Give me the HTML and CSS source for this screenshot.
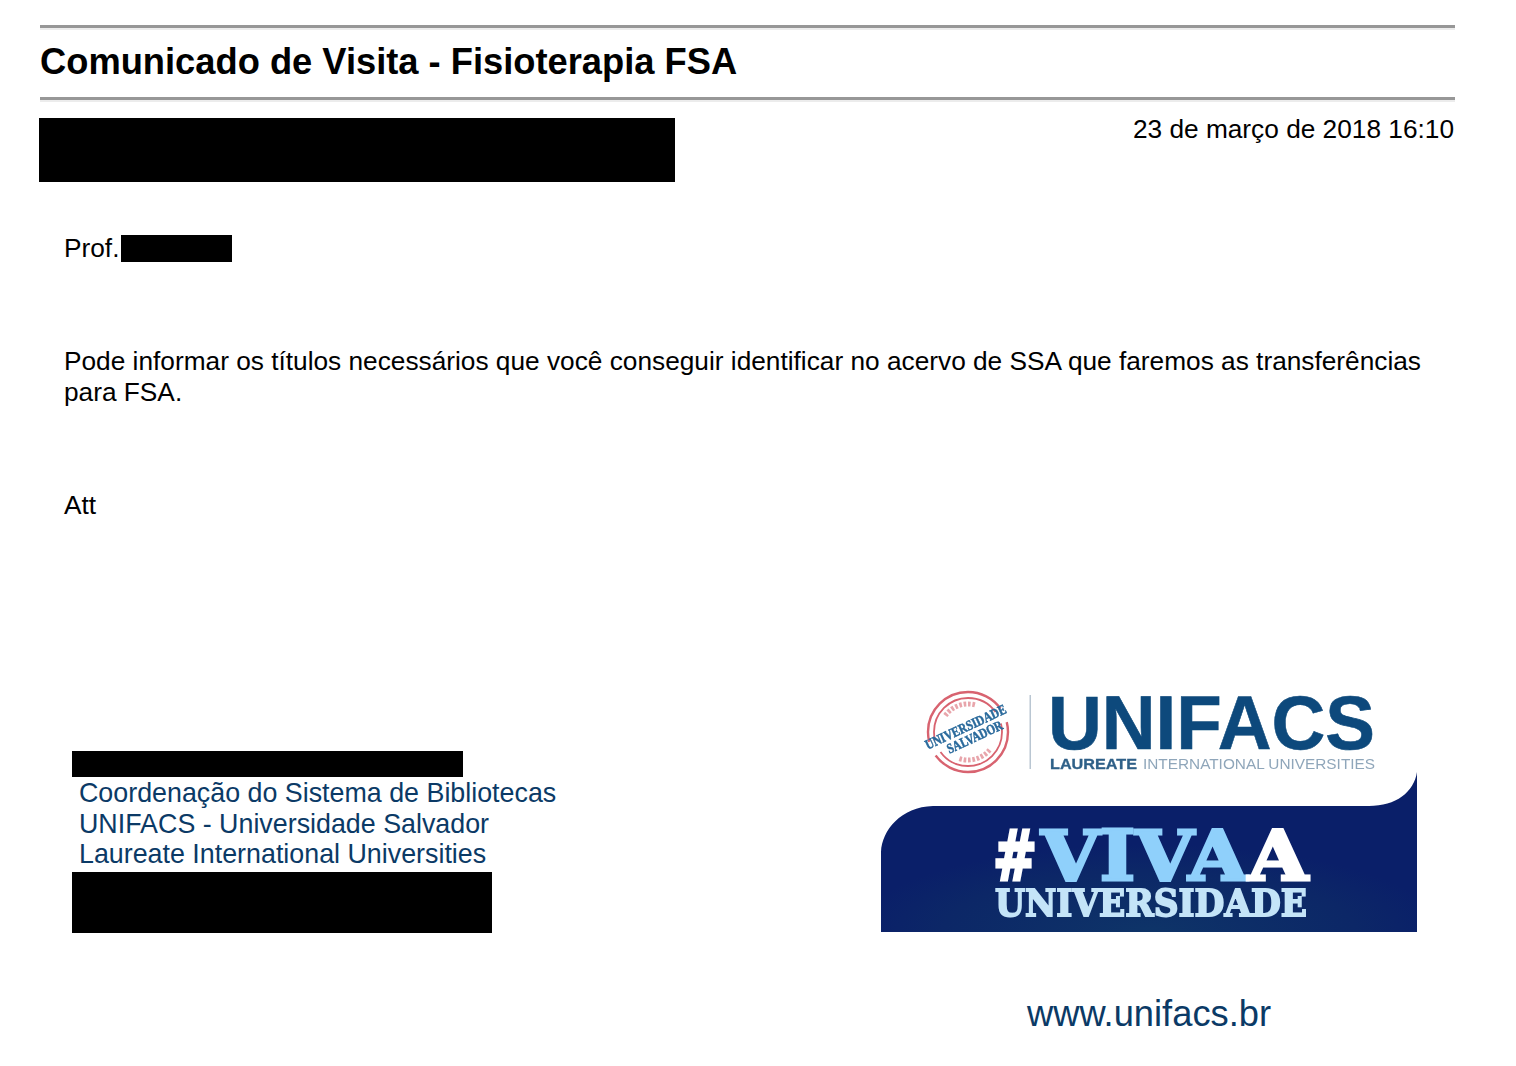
FILE: index.html
```html
<!DOCTYPE html>
<html lang="pt-BR">
<head>
<meta charset="utf-8">
<title>Comunicado de Visita - Fisioterapia FSA</title>
<link rel="stylesheet" href="styles.css">
</head>
<body>
<div class="page">
  <div class="rule"></div>
  <h1 class="title">Comunicado de Visita - Fisioterapia FSA</h1>
  <div class="rule"></div>
  <div class="meta">
    <div class="redact redact-from"></div>
    <div class="date">23 de março de 2018 16:10</div>
  </div>
  <div class="message">
    <p class="greeting">Prof.<span class="redact redact-name"></span></p>
    <p>Pode informar os títulos necessários que você conseguir identificar no acervo de SSA que faremos as transferências para FSA.</p>
    <p>Att</p>
  </div>
  <div class="signature">
    <div class="sig-left">
      <div class="redact redact-sender"></div>
      <div class="sig-text">Coordenação do Sistema de Bibliotecas<br>UNIFACS - Universidade Salvador<br>Laureate International Universities</div>
      <div class="redact redact-contact"></div>
    </div>
    <div class="sig-right">
      <svg class="banner" viewBox="0 0 536 251" width="536" height="251" role="img" aria-label="UNIFACS Laureate International Universities #VIVAA Universidade">
        <defs>
          <filter id="soft" x="-5%" y="-5%" width="110%" height="110%"><feGaussianBlur stdDeviation="0.75"/></filter>
          <radialGradient id="navy" cx="50%" cy="100%" r="55%">
            <stop offset="0" stop-color="#0e3468"/>
            <stop offset="0.7" stop-color="#0c2767"/>
            <stop offset="1" stop-color="#0a1f69"/>
          </radialGradient>
        </defs>
        <path d="M0 251V171C1 149 20 126 52 125H488C515 125 533 111 536 91V251Z" fill="url(#navy)"/>
        <g filter="url(#soft)">
          <g fill="none" stroke="#d8636f">
            <circle class="ring" cx="87" cy="51" r="40" pathLength="100" stroke-width="2.4"/>
            <circle class="ring" cx="87" cy="51" r="34" pathLength="100" stroke-width="1.8"/>
            <circle class="ring-text" cx="87" cy="51" r="28" pathLength="100" stroke-width="5"/>
          </g>
          <g transform="rotate(-25 87 51)" class="seal-text">
            <text x="87" y="50" text-anchor="middle" textLength="88" lengthAdjust="spacingAndGlyphs">UNIVERSIDADE</text>
            <text x="91" y="63" text-anchor="middle" textLength="60" lengthAdjust="spacingAndGlyphs">SALVADOR</text>
          </g>
          <rect x="148.500" y="14" width="1.500" height="74" fill="#b9c6d2"/>
          <text class="logo-word" x="167" y="68" textLength="327" lengthAdjust="spacingAndGlyphs">UNIFACS</text>
          <text class="logo-bold" x="169" y="88" textLength="87" lengthAdjust="spacingAndGlyphs">LAUREATE</text>
          <text class="logo-thin" x="262" y="88" textLength="232" lengthAdjust="spacingAndGlyphs">INTERNATIONAL UNIVERSITIES</text>
          <text class="viva viva-hash" x="112" y="199" textLength="44" lengthAdjust="spacingAndGlyphs">#</text>
          <text class="viva viva-blue" x="160" y="199" textLength="206" lengthAdjust="spacingAndGlyphs">VIVA</text>
          <text class="viva viva-white" x="367" y="199" textLength="60" lengthAdjust="spacingAndGlyphs">A</text>
          <text class="uni" x="114" y="235" textLength="312" lengthAdjust="spacingAndGlyphs">UNIVERSIDADE</text>
        </g>
      </svg>
      <div class="url">www.unifacs.br</div>
    </div>
  </div>
</div>
</body>
</html>
```

FILE: styles.css
```css
* { box-sizing: border-box; }
html, body { margin: 0; padding: 0; background: #fff; }
body { font-family: "Liberation Sans", Arial, sans-serif; color: #000; }
.page { width: 1516px; height: 1066px; overflow: hidden; padding: 25px 61px 0 40px; }
.rule { height: 5px; border-top: 3px solid #979797; border-bottom: 2px solid #ececec; }
.title { margin: 0; height: 67px; font-size: 36.300px; line-height: 64px; font-weight: 700; }
.meta { display: flex; justify-content: space-between; align-items: flex-start; padding: 16px 1px 0 0; margin-left: -1px; height: 83px; }
.date { font-size: 26.250px; line-height: 30px; margin-top: -4px; }
.redact { background: #000; }
.redact-from { width: 636px; height: 64px; }
.redact-name { display: inline-block; width: 111px; height: 27px; margin-left: 2px; vertical-align: -5px; }
.message { display: flex; flex-direction: column; gap: 82px; padding: 48px 0 0 24px; font-size: 26.250px; line-height: 31px; }
.message p { margin: 0; }
.signature { display: flex; margin: 160px 0 0 0; }
.sig-left { width: 841px; padding: 70px 0 0 32px; }
.redact-sender { width: 391px; height: 26px; }
.sig-text { padding: 1px 0 0 7px; font-size: 26.830px; line-height: 30.500px; color: #0b3a66; }
.redact-contact { width: 420px; height: 61px; margin-top: 2px; }
.sig-right { width: 536px; }
.banner { display: block; }
.url { margin-top: 62px; text-align: center; font-size: 36.300px; line-height: 40px; color: #0b3a66; }
.ring { stroke-dasharray: 44 6 44 6; stroke-dashoffset: 4; }
.ring-text { stroke: #e8a5ab; stroke-dasharray: 1.500 1 1.500 1 1.500 1 1.500 1 1.500 1 1.500 1 1.500 1 1.500 32 1.500 1 1.500 1 1.500 1 1.500 1 1.500 1 1.500 1 1.500 1 1.500 30; stroke-dashoffset: -60; }
.seal-text { font-family: "Liberation Serif", serif; font-weight: 700; font-size: 14px; fill: #2a6a9c; stroke: #2a6a9c; stroke-width: 0.500; }
.logo-word { font-family: "Liberation Sans", sans-serif; font-weight: 700; font-size: 76px; fill: #0d4a7c; stroke: #0d4a7c; stroke-width: 0.600; }
.logo-bold { font-family: "Liberation Sans", sans-serif; font-weight: 700; font-size: 15px; fill: #2f6088; stroke: #2f6088; stroke-width: 0.300; }
.logo-thin { font-family: "Liberation Sans", sans-serif; font-size: 15px; fill: #8fa6ba; }
.viva { font-family: "DejaVu Serif", serif; font-weight: 700; font-size: 70px; stroke-width: 3; }
.viva-hash { font-family: "DejaVu Sans", sans-serif; fill: #fff; stroke: #fff; }
.viva-blue { fill: #8fd0fb; stroke: #8fd0fb; }
.viva-white { fill: #fff; stroke: #fff; }
.uni { font-family: "DejaVu Serif", serif; font-weight: 700; font-size: 37px; fill: #c4e4f8; stroke: #c4e4f8; stroke-width: 1.800; }
```
